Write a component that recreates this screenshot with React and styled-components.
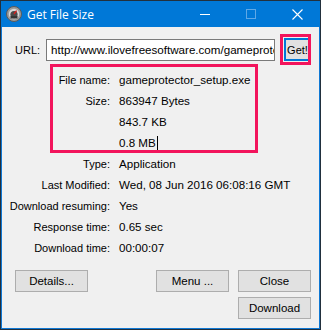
import React from "react";
import styled, { createGlobalStyle } from "styled-components";

const Global = createGlobalStyle`
  html, body {
    margin: 0;
    padding: 0;
    background: #f0f0f0;
  }
`;

const Frame = styled.div`
  width: 321px;
  height: 330px;
  box-sizing: border-box;
  border: 1px solid #22303d;
  background: #0f78d4;
  display: flex;
  flex-direction: column;
  font-family: "Liberation Sans", Arial, sans-serif;
  font-size: 11px;
  color: #000;
`;

const TitleBar = styled.div`
  height: 26px;
  flex: none;
  background: #0078d7;
  display: flex;
  align-items: center;
  padding-left: 5px;
  color: #fff;
`;

const Title = styled.div`
  font-family: "Open Sans", "Noto Sans", sans-serif;
  font-size: 12px;
  margin-left: 5px;
  flex: 1;
`;

const Control = styled.div`
  width: 46px;
  height: 26px;
  display: flex;
  align-items: center;
  justify-content: center;
`;

const Client = styled.div`
  flex: 1;
  margin: 0 1px 1px 1px;
  background: #f0f0f0;
  display: flex;
  flex-direction: column;
  padding: 11px 8px 0 13px;
`;

const UrlRow = styled.div`
  display: flex;
  align-items: center;
  height: 23px;
  position: relative;
`;

const UrlLabel = styled.div`
  width: 31px;
  font-size: 11px;
`;

const UrlInput = styled.div`
  width: 229px;
  height: 22px;
  box-sizing: border-box;
  border: 1px solid #7a7a7a;
  background: #fff;
  font-size: 11.6px;
  line-height: 20px;
  padding-left: 4px;
  white-space: nowrap;
  overflow: hidden;
`;

const GetButton = styled.div`
  margin-left: 9px;
  width: 27px;
  height: 23px;
  box-sizing: border-box;
  border: 2px solid #0078d7;
  background: #e1e1e1;
  display: flex;
  align-items: center;
  justify-content: center;
  font-size: 11px;
`;

const Mark = styled.div`
  position: absolute;
  border: 3px solid #f2145c;
  pointer-events: none;
`;

const Info = styled.div`
  position: relative;
  margin-top: 8px;
  margin-left: -12px;
`;

const Row = styled.div`
  display: flex;
  height: 21px;
  align-items: center;
`;

const Label = styled.div`
  width: 107px;
  text-align: right;
  flex: none;
  white-space: nowrap;
`;

const Value = styled.div`
  margin-left: 9px;
  white-space: nowrap;
  font-size: 11.6px;
  display: flex;
  align-items: center;
`;

const Caret = styled.span`
  display: inline-block;
  width: 1px;
  height: 14px;
  margin-left: 1px;
  background: #000;
`;

const ButtonRow = styled.div`
  display: flex;
  justify-content: ${(p) => (p.$end ? "flex-end" : "space-between")};
  margin-top: ${(p) => p.$top}px;
`;

const Group = styled.div`
  display: flex;
  gap: 9px;
`;

const Button = styled.div`
  width: 73px;
  height: 22px;
  box-sizing: border-box;
  border: 1px solid #adadad;
  background: #e1e1e1;
  display: flex;
  align-items: center;
  justify-content: center;
  font-size: 11.5px;
`;

const rows = [
  ["File name:", "gameprotector_setup.exe"],
  ["Size:", "863947 Bytes"],
  ["", "843.7 KB"],
  ["", "0.8 MB", true],
  ["Type:", "Application"],
  ["Last Modified:", "Wed, 08 Jun 2016 06:08:16 GMT"],
  ["Download resuming:", "Yes"],
  ["Response time:", "0.65 sec"],
  ["Download time:", "00:00:07"],
];

function AppIcon() {
  return (
    <svg width="16" height="16" viewBox="0 0 16 16">
      <circle cx="8" cy="8" r="7.5" fill="#9b9b9b" stroke="#5a5a5a" />
      <circle cx="8" cy="8" r="5.2" fill="#d8d8d8" />
      <circle cx="8" cy="8.6" r="3.6" fill="#4a4a4a" />
      <rect x="4.5" y="10" width="7" height="2.5" fill="#333" />
      <line x1="8" y1="8" x2="10.6" y2="4.6" stroke="#d42020" strokeWidth="1.4" />
    </svg>
  );
}

export default function App() {
  return (
    <Frame>
      <Global />
      <TitleBar>
        <AppIcon />
        <Title>Get File Size</Title>
        <Control>
          <svg width="10" height="10" viewBox="0 0 10 10">
            <line x1="0" y1="5.5" x2="10" y2="5.5" stroke="#fff" />
          </svg>
        </Control>
        <Control>
          <svg width="10" height="10" viewBox="0 0 10 10">
            <rect x="0.5" y="0.5" width="9" height="9" fill="none" stroke="#5fa8e6" />
          </svg>
        </Control>
        <Control>
          <svg width="11" height="11" viewBox="0 0 11 11">
            <path d="M0.5 0.5 L10.5 10.5 M10.5 0.5 L0.5 10.5" stroke="#fff" strokeWidth="1.1" />
          </svg>
        </Control>
      </TitleBar>
      <Client>
        <UrlRow>
          <UrlLabel>URL:</UrlLabel>
          <UrlInput>http://www.ilovefreesoftware.com/gameprotector_setup.exe</UrlInput>
          <GetButton>Get!</GetButton>
          <Mark style={{ left: 265, top: -4, width: 25, height: 25 }} />
        </UrlRow>
        <Info>
          {rows.map(([label, value, caret], i) => (
            <Row key={i}>
              <Label>{label}</Label>
              <Value>
                {value}
                {caret && <Caret />}
              </Value>
            </Row>
          ))}
          <Mark style={{ left: 47, top: -5, width: 202, height: 83 }} />
        </Info>
        <ButtonRow $top={12}>
          <Button>Details...</Button>
          <Group>
            <Button>Menu ...</Button>
            <Button>Close</Button>
          </Group>
        </ButtonRow>
        <ButtonRow $end $top={5}>
          <Button>Download</Button>
        </ButtonRow>
      </Client>
    </Frame>
  );
}
